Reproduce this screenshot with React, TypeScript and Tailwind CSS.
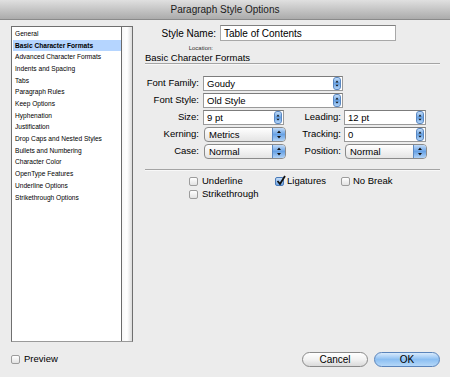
import React from "react";

const items = [
  "General",
  "Basic Character Formats",
  "Advanced Character Formats",
  "Indents and Spacing",
  "Tabs",
  "Paragraph Rules",
  "Keep Options",
  "Hyphenation",
  "Justification",
  "Drop Caps and Nested Styles",
  "Bullets and Numbering",
  "Character Color",
  "OpenType Features",
  "Underline Options",
  "Strikethrough Options",
];

function Arrows() {
  return (
    <svg width="8" height="13" viewBox="0 0 8 13">
      <path d="M4 2.5 L6 5 L2 5 Z" fill="#111" />
      <path d="M4 10.5 L6 8 L2 8 Z" fill="#111" />
    </svg>
  );
}

function Stepper() {
  return (
    <div className="w-[8px] h-[13px] rounded-[3px] bg-gradient-to-b from-[#c3ddf8] via-[#6aa4e6] to-[#b2d3f6] border border-[#5a88c2] flex items-center justify-center">
      <Arrows />
    </div>
  );
}

function Combo({ value, width }: { value: string; width: string }) {
  return (
    <div
      className={`${width} h-[15px] bg-white border border-[#9a9a9a] border-t-[#7c7c7c] flex items-center justify-between pl-[3px] pr-[1px]`}
    >
      <span className="leading-none">{value}</span>
      <Stepper />
    </div>
  );
}

function Popup({ value }: { value: string }) {
  return (
    <div className="w-[82px] h-[15px] rounded-[4px] border border-[#8a8a8a] bg-gradient-to-b from-white to-[#e4e4e4] flex items-stretch overflow-hidden">
      <span className="flex-1 pl-[4px] flex items-center leading-none">{value}</span>
      <div className="w-[13px] bg-gradient-to-b from-[#c1dbf8] via-[#68a2e5] to-[#b0d2f6] border-l border-[#5a88c2] flex items-center justify-center">
        <Arrows />
      </div>
    </div>
  );
}

function Check({ checked = false }: { checked?: boolean }) {
  return (
    <div
      className={`relative w-[9px] h-[9px] rounded-[2px] border ${
        checked
          ? "border-[#4a7ab8] bg-gradient-to-b from-[#c3dcf7] to-[#6ea6e6]"
          : "border-[#9c9c9c] bg-gradient-to-b from-white to-[#e2e2e2]"
      }`}
    >
      {checked && (
        <svg className="absolute left-[0px] top-[-3px]" width="10" height="11" viewBox="0 0 10 11">
          <path d="M1.5 6 L4 9 L9 1" stroke="#111" strokeWidth="1.8" fill="none" />
        </svg>
      )}
    </div>
  );
}

export default function App() {
  return (
    <div
      className="w-[450px] h-[377px] bg-[#ececec] flex flex-col text-[9.5px] text-black overflow-hidden"
      style={{ fontFamily: '"Liberation Sans", Arial, sans-serif' }}
    >
      {/* Title bar */}
      <div className="h-[20px] bg-gradient-to-b from-[#e0e0e0] to-[#ababab] border-b border-[#8a8a8a] flex items-center justify-center text-[10px] text-[#1a1a1a]">
        Paragraph Style Options
      </div>

      {/* Main */}
      <div className="flex items-start pt-[5px] pl-[11px]">
        {/* List */}
        <div className="mt-[1px] w-[122px] h-[316px] border border-[#6f6f6f] border-b-[#9a9a9a] bg-white flex">
          <div className="flex-1 pt-[1px] pl-[1px] text-[6.6px]">
            {items.map((it, i) => (
              <div
                key={it}
                className={`h-[11.7px] flex items-center pl-[2px] ${
                  i === 1 ? "bg-[#b5d5ff] font-bold" : ""
                }`}
              >
                {it}
              </div>
            ))}
          </div>
          <div className="w-[11px] border-l border-[#6a6a6a] bg-gradient-to-r from-[#f7f7f7] via-[#ffffff] to-[#dcdcdc]" />
        </div>

        {/* Right panel */}
        <div className="flex-1 pl-[12px] pr-[10px] flex flex-col">
          <div className="h-[16px] flex items-center">
            <span className="w-[71px] text-right text-[10px]">Style Name:</span>
            <div className="ml-[4px] w-[176px] h-[16px] bg-white border border-[#a8a8a8] border-t-[#808080] flex items-center pl-[3px] text-[10px]">
              Table of Contents
            </div>
          </div>
          <div className="mt-[3px] h-[8px] w-[68px] text-right text-[6px] leading-[8px] text-[#333]">
            Location:
          </div>
          <div className="mt-[1px] h-[10px] leading-[10px] text-[9.5px]">Basic Character Formats</div>
          <div className="h-px bg-[#a4a4a4]" />
          <div className="h-px bg-[#f8f8f8]" />

          <div className="mt-[11px] flex flex-col gap-[2px]">
            <div className="h-[15px] flex items-center">
              <span className="w-[54px] text-right">Font Family:</span>
              <div className="ml-[4px]">
                <Combo value="Goudy" width="w-[140px]" />
              </div>
            </div>
            <div className="h-[15px] flex items-center">
              <span className="w-[54px] text-right">Font Style:</span>
              <div className="ml-[4px]">
                <Combo value="Old Style" width="w-[140px]" />
              </div>
            </div>
            <div className="h-[15px] flex items-center">
              <span className="w-[54px] text-right">Size:</span>
              <div className="ml-[4px]">
                <Combo value="9 pt" width="w-[81px]" />
              </div>
              <span className="w-[57px] text-right">Leading:</span>
              <div className="ml-[3px]">
                <Combo value="12 pt" width="w-[82px]" />
              </div>
            </div>
            <div className="h-[15px] flex items-center">
              <span className="w-[54px] text-right">Kerning:</span>
              <div className="ml-[5px]">
                <Popup value="Metrics" />
              </div>
              <span className="w-[55px] text-right">Tracking:</span>
              <div className="ml-[3px]">
                <Combo value="0" width="w-[82px]" />
              </div>
            </div>
            <div className="h-[15px] flex items-center">
              <span className="w-[54px] text-right">Case:</span>
              <div className="ml-[5px]">
                <Popup value="Normal" />
              </div>
              <span className="w-[55px] text-right">Position:</span>
              <div className="ml-[4px]">
                <Popup value="Normal" />
              </div>
            </div>
          </div>

          <div className="mt-[10px] h-px bg-[#a4a4a4]" />
          <div className="h-px bg-[#f8f8f8]" />

          <div className="mt-[6px] pl-[44px] flex flex-col gap-[4px]">
            <div className="h-[9px] flex items-center">
              <div className="w-[86px] flex items-center">
                <Check />
                <span className="ml-[4px]">Underline</span>
              </div>
              <div className="w-[66px] flex items-center">
                <Check checked />
                <span className="ml-[3px]">Ligatures</span>
              </div>
              <div className="flex items-center">
                <Check />
                <span className="ml-[3px]">No Break</span>
              </div>
            </div>
            <div className="h-[9px] flex items-center">
              <Check />
              <span className="ml-[4px]">Strikethrough</span>
            </div>
          </div>
        </div>
      </div>

      {/* Bottom */}
      <div className="mt-[10px] h-[15px] flex items-center pl-[11px] pr-[10px]">
        <Check />
        <span className="ml-[4px] text-[9.5px]">Preview</span>
        <div className="flex-1" />
        <div className="w-[66px] h-[15px] rounded-full border border-[#8a8a8a] bg-gradient-to-b from-white via-[#f2f2f2] to-[#dadada] flex items-center justify-center text-[10px]">
          Cancel
        </div>
        <div className="ml-[6px] w-[66px] h-[15px] rounded-full border border-[#5a84bb] bg-gradient-to-b from-[#d8eafc] via-[#8cbff2] to-[#b4d7f8] flex items-center justify-center text-[10px]">
          OK
        </div>
      </div>
    </div>
  );
}
